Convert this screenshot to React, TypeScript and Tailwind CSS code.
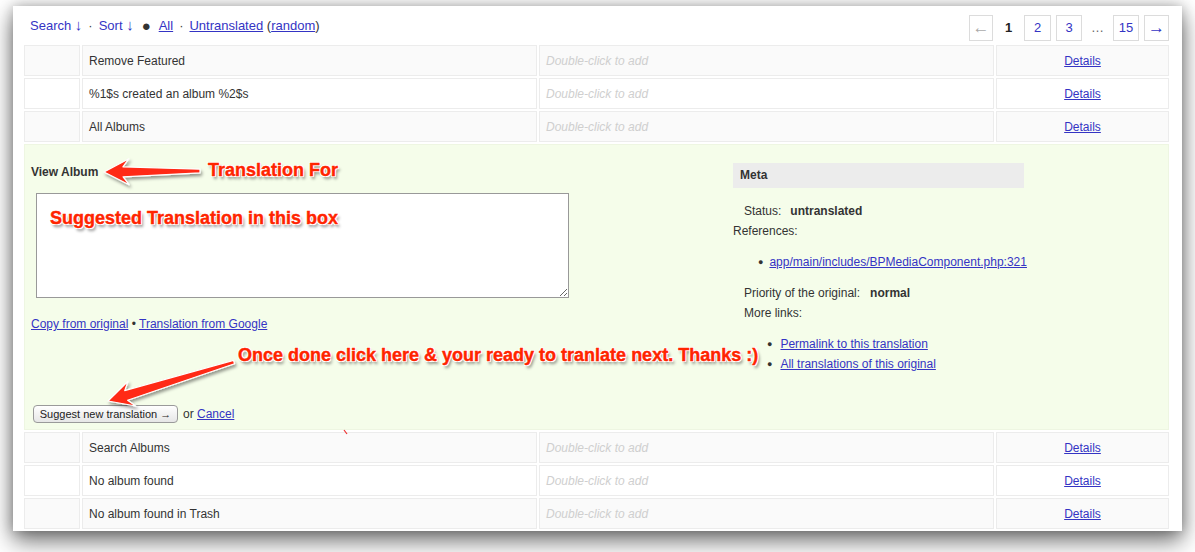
import React from "react";

const rowsTop = ["Remove Featured", "%1$s created an album %2$s", "All Albums"];
const rowsBottom = ["Search Albums", "No album found", "No album found in Trash"];

const link = "text-[#3434c4] underline";
const redNote =
  "absolute whitespace-nowrap font-bold text-[18px] leading-[20px] text-[#ff2400] [-webkit-text-stroke:0.4px_#ff2400] [text-shadow:1px_1px_0_#fff,-1px_-1px_0_#fff,1px_-1px_0_#fff,-1px_1px_0_#fff,0_1px_0_#fff,1px_0_0_#fff,2px_3px_3px_rgba(0,0,0,0.45)]";

function Row({ text, odd }: { text: string; odd: boolean }) {
  const bg = odd ? "bg-white" : "bg-[#fafafa]";
  return (
    <div className="flex h-[31px] gap-[2px] text-[12px] text-[#333]">
      <div className={`w-[56px] border border-[#ececec] ${bg}`} />
      <div className={`flex w-[455px] items-center border border-[#ececec] px-[6px] ${bg}`}>{text}</div>
      <div className={`flex w-[455px] items-center border border-[#ececec] px-[6px] italic text-[#cfcfcf] ${bg}`}>
        Double-click to add
      </div>
      <div className={`flex w-[173px] items-center justify-center border border-[#ececec] ${bg}`}>
        <a className={link}>Details</a>
      </div>
    </div>
  );
}

// tapered skitch-style arrow from tail to tip
function arrowPoints(tx: number, ty: number, hx: number, hy: number) {
  const len = Math.hypot(hx - tx, hy - ty);
  const dx = (hx - tx) / len;
  const dy = (hy - ty) / len;
  const nx = -dy;
  const ny = dx;
  const p = (along: number, side: number) =>
    `${(tx + dx * along + nx * side).toFixed(1)},${(ty + dy * along + ny * side).toFixed(1)}`;
  const neck = len - 19;
  const back = len - 25;
  return [p(0, 1.8), p(neck, 5), p(back, 13), p(len, 0), p(back, -13), p(neck, -5), p(0, -1.8)].join(" ");
}

function PageBox({ children, className = "" }: { children: React.ReactNode; className?: string }) {
  return (
    <div className={`flex h-[26px] items-center justify-center border border-[#dcdcdc] bg-white ${className}`}>
      {children}
    </div>
  );
}

export default function App() {
  return (
    <div className="h-[552px] w-full overflow-hidden bg-white pt-[6px] pl-[13px] font-['Liberation_Sans',Arial,sans-serif]">
      <div className="relative h-[525px] w-[1169px] bg-white pl-[11px] pr-[13px] shadow-[0_10px_22px_rgba(0,0,0,0.55),0_0_12px_rgba(0,0,0,0.25)]">
        {/* header */}
        <div className="flex h-[39px] justify-between">
          <div className="flex items-center gap-[6px] self-start pt-[11px] pl-[6px] text-[13px] leading-[16px] text-[#3434c4]">
            <span>
              Search <span className="text-[15px]">↓</span>
            </span>
            <span className="text-[#444]">·</span>
            <span>
              Sort <span className="text-[15px]">↓</span>
            </span>
            <span className="mx-[2px] text-[15px] text-[#333]">●</span>
            <a className="underline">All</a>
            <span className="text-[#444]">·</span>
            <span className="text-[#333]">
              <a className={link}>Untranslated</a> (<a className={link}>random</a>)
            </span>
          </div>
          <div className="flex gap-[5px] self-start pt-[9px] text-[13px]">
            <PageBox className="w-[24px] text-[17px] text-[#aaa]">←</PageBox>
            <div className="flex h-[26px] w-[21px] items-center justify-center font-bold text-[#222]">1</div>
            <PageBox className="w-[27px] text-[#3434c4]">2</PageBox>
            <PageBox className="w-[26px] text-[#3434c4]">3</PageBox>
            <div className="flex h-[26px] w-[21px] items-center justify-center text-[#666]">…</div>
            <PageBox className="w-[26px] text-[#3434c4]">15</PageBox>
            <PageBox className="w-[25px] text-[17px] text-[#3434c4]">→</PageBox>
          </div>
        </div>

        {/* table */}
        <div className="flex flex-col gap-[2px]">
          {rowsTop.map((t, i) => (
            <Row key={t} text={t} odd={i % 2 === 1} />
          ))}

          <div className="flex h-[286px] border border-[#eef6e2] bg-[#f5fdea] pl-[6px] text-[12px] leading-[15px] text-[#333]">
            <div className="w-[540px]">
              <div className="pt-[20px] text-[12px] font-bold leading-[14px] text-[#333]">View Album</div>
              <textarea
                className="mt-[14px] ml-[5px] block h-[105px] w-[533px] resize-y border border-[#999] bg-white outline-none"
                readOnly
              />
              <div className="mt-[19px] text-[12px]">
                <a className={link}>Copy from original</a> • <a className={link}>Translation from Google</a>
              </div>
              <div className="mt-[73px] ml-[2px] flex items-center gap-[5px]">
                <button className="h-[18px] w-[145px] rounded-[4px] border border-[#9a9a9a] bg-gradient-to-b from-white to-[#e6e6e6] text-[11px] leading-[16px] text-[#222]">
                  Suggest new translation →
                </button>
                <span>
                  or <a className={link}>Cancel</a>
                </span>
              </div>
            </div>

            <div className="ml-[162px] w-[291px]">
              <div className="mt-[18px] flex h-[25px] items-center bg-[#ececec] px-[7px] font-bold text-[#333]">Meta</div>
              <div className="mt-[16px] ml-[11px] flex gap-[9px]">
                <span>Status:</span>
                <b>untranslated</b>
              </div>
              <div className="mt-[5px]">References:</div>
              <div className="mt-[16px] ml-[25px] flex items-center gap-[6px]">
                <span className="text-[9px]">●</span>
                <a className={link}>app/main/includes/BPMediaComponent.php:321</a>
              </div>
              <div className="mt-[16px] ml-[11px] flex gap-[10px]">
                <span>Priority of the original:</span>
                <b>normal</b>
              </div>
              <div className="mt-[5px] ml-[11px]">More links:</div>
              <div className="mt-[16px] ml-[34px] flex items-center gap-[8px]">
                <span className="text-[9px]">●</span>
                <a className={link}>Permalink to this translation</a>
              </div>
              <div className="mt-[5px] ml-[34px] flex items-center gap-[8px]">
                <span className="text-[9px]">●</span>
                <a className={link}>All translations of this original</a>
              </div>
            </div>
          </div>

          {rowsBottom.map((t, i) => (
            <Row key={t} text={t} odd={i % 2 === 1} />
          ))}
        </div>

        {/* screenshot annotations */}
        <svg className="pointer-events-none absolute inset-0 h-full w-full" viewBox="0 0 1169 525">
          <defs>
            <filter id="sh" x="-20%" y="-50%" width="140%" height="200%">
              <feDropShadow dx="1.5" dy="2.5" stdDeviation="1.5" floodColor="#000" floodOpacity="0.4" />
            </filter>
          </defs>
          <polygon
            points={arrowPoints(187, 165, 91, 166)}
            fill="#ff2a14"
            stroke="#fff"
            strokeWidth="1.2"
            strokeLinejoin="round"
            filter="url(#sh)"
          />
          <polygon
            points={arrowPoints(221, 356, 95, 395)}
            fill="#ff2a14"
            stroke="#fff"
            strokeWidth="1.2"
            strokeLinejoin="round"
            filter="url(#sh)"
          />
          <line x1="331" y1="424" x2="334" y2="428" stroke="#e33" strokeWidth="1.2" />
        </svg>
        <div className={`${redNote} left-[195px] top-[154px]`}>Translation For</div>
        <div className={`${redNote} left-[37px] top-[202px]`}>Suggested Translation in this box</div>
        <div className={`${redNote} left-[225px] top-[339px]`}>
          Once done click here &amp; your ready to tranlate next. Thanks :)
        </div>
      </div>
    </div>
  );
}
